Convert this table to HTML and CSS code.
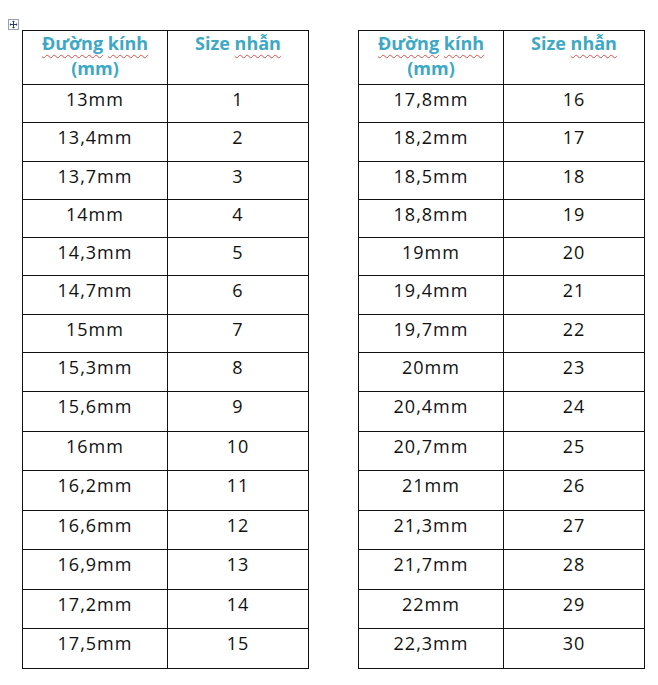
FILE: index.html
```html
<!DOCTYPE html>
<html lang="vi">
<head>
<meta charset="utf-8">
<title>Bảng size nhẫn</title>
<link rel="stylesheet" href="styles.css">
</head>
<body>
<div class="page">
  <div class="tbl-wrap">
    <span class="move-handle" aria-hidden="true">
      <svg width="11" height="11" viewBox="0 0 11 11">
        <rect x="0.5" y="0.5" width="10" height="10" fill="#fff" stroke="#9aa3ad"/>
        <path d="M5.5 2v7M2 5.5h7" stroke="#2a3f66" stroke-width="1"/>
        <path d="M5.5 1.5l-1.5 1.5h3zM5.5 9.5l-1.5-1.5h3zM1.5 5.5l1.5-1.5v3zM9.5 5.5l-1.5-1.5v3z" fill="#2a3f66"/>
      </svg>
    </span>
    <div class="tbl" role="table">
      <div class="th" role="columnheader"><span class="sp">Đường</span> <span class="sp">kính</span><br>(mm)</div>
      <div class="th" role="columnheader">Size <span class="sp">nhẫn</span></div>
      <div class="td">13mm</div><div class="td">1</div>
      <div class="td">13,4mm</div><div class="td">2</div>
      <div class="td">13,7mm</div><div class="td">3</div>
      <div class="td">14mm</div><div class="td">4</div>
      <div class="td">14,3mm</div><div class="td">5</div>
      <div class="td">14,7mm</div><div class="td">6</div>
      <div class="td">15mm</div><div class="td">7</div>
      <div class="td">15,3mm</div><div class="td">8</div>
      <div class="td">15,6mm</div><div class="td">9</div>
      <div class="td">16mm</div><div class="td">10</div>
      <div class="td">16,2mm</div><div class="td">11</div>
      <div class="td">16,6mm</div><div class="td">12</div>
      <div class="td">16,9mm</div><div class="td">13</div>
      <div class="td">17,2mm</div><div class="td">14</div>
      <div class="td">17,5mm</div><div class="td">15</div>
    </div>
    <span class="resize-handle" aria-hidden="true"></span>
  </div>
  <div class="tbl-wrap">
    <div class="tbl" role="table">
      <div class="th" role="columnheader"><span class="sp">Đường</span> <span class="sp">kính</span><br>(mm)</div>
      <div class="th" role="columnheader">Size <span class="sp">nhẫn</span></div>
      <div class="td">17,8mm</div><div class="td">16</div>
      <div class="td">18,2mm</div><div class="td">17</div>
      <div class="td">18,5mm</div><div class="td">18</div>
      <div class="td">18,8mm</div><div class="td">19</div>
      <div class="td">19mm</div><div class="td">20</div>
      <div class="td">19,4mm</div><div class="td">21</div>
      <div class="td">19,7mm</div><div class="td">22</div>
      <div class="td">20mm</div><div class="td">23</div>
      <div class="td">20,4mm</div><div class="td">24</div>
      <div class="td">20,7mm</div><div class="td">25</div>
      <div class="td">21mm</div><div class="td">26</div>
      <div class="td">21,3mm</div><div class="td">27</div>
      <div class="td">21,7mm</div><div class="td">28</div>
      <div class="td">22mm</div><div class="td">29</div>
      <div class="td">22,3mm</div><div class="td">30</div>
    </div>
  </div>
</div>
</body>
</html>
```

FILE: styles.css
```css
html, body {
  margin: 0;
  background: #ffffff;
}

.page {
  display: flex;
  gap: 49px;
  padding: 30px 0 0 22px;
  font-family: "Open Sans", "Noto Sans", sans-serif;
  color: #111111;
}

.tbl-wrap {
  position: relative;
}

.tbl {
  display: grid;
  grid-template-columns: 145px 141px;
  grid-template-rows: 54px repeat(7, 38.286px) repeat(8, 39.5px);
  border-left: 1px solid #111;
  border-top: 1px solid #111;
}

.th, .td {
  box-sizing: border-box;
  border-right: 1px solid #111;
  border-bottom: 1px solid #111;
  text-align: center;
}

.th {
  font-weight: 700;
  font-size: 18px;
  line-height: 25px;
  color: #3ea8c5;
  padding-top: 0;
}

.td {
  font-size: 18px;
  line-height: 25px;
  letter-spacing: 1px;
  padding-top: 2px;
}

.sp {
  text-decoration: underline wavy #d65050;
  text-decoration-thickness: 1px;
  text-underline-offset: 4px;
}

.move-handle {
  position: absolute;
  left: -14px;
  top: -11px;
  width: 11px;
  height: 11px;
  line-height: 0;
}

.resize-handle {
  position: absolute;
  right: -6px;
  bottom: -8px;
  width: 5px;
  height: 5px;
  border: 1px solid #8a9099;
  background: #fff;
}
```
